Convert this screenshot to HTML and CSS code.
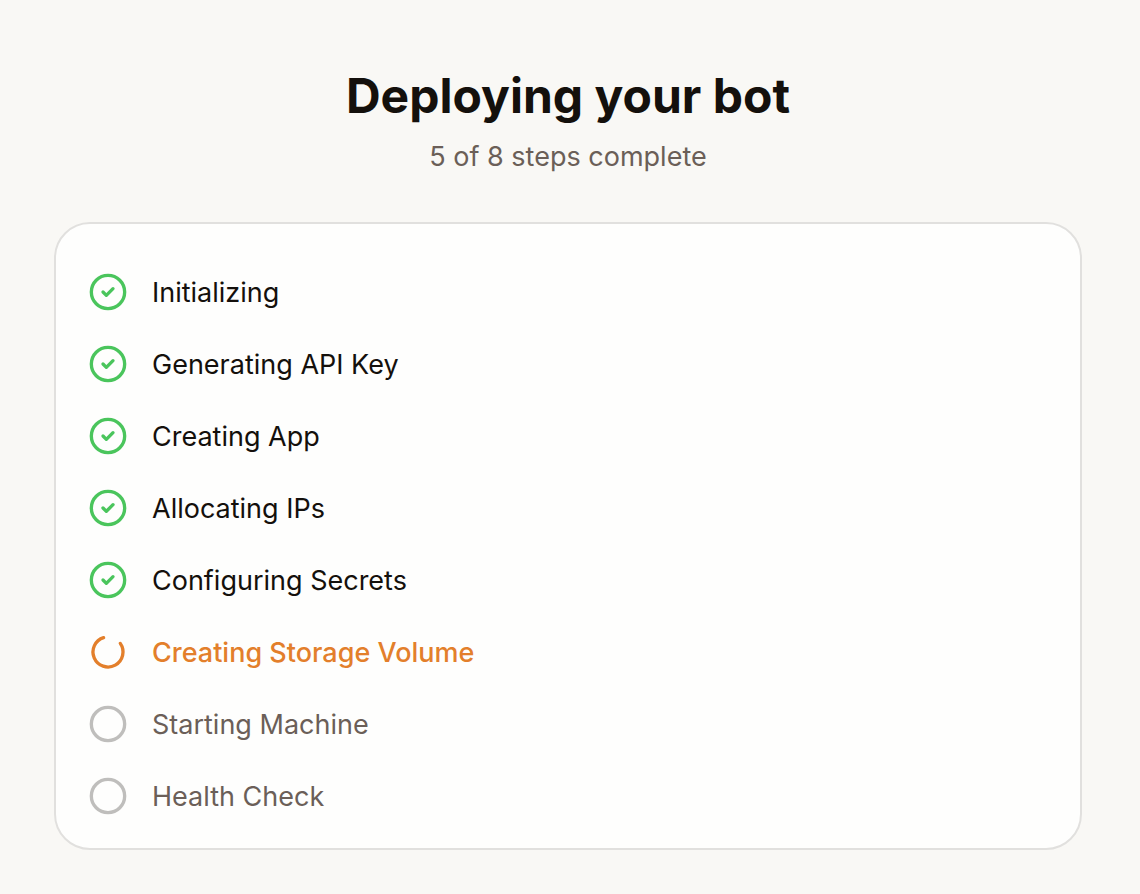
FILE: index.html
```
<!DOCTYPE html>
<html lang="en">
<head>
<meta charset="utf-8">
<meta name="viewport" content="width=device-width, initial-scale=1">
<title>Deploying your bot</title>
<link rel="stylesheet" href="styles.css">
</head>
<body>
<svg class="sprite" aria-hidden="true">
  <symbol id="done" viewBox="0 0 24 24"><circle cx="12" cy="12" r="10"/><path d="m9 12 2 2 4-4"/></symbol>
  <symbol id="active" viewBox="0 0 24 24"><path d="M21 12a9 9 0 1 1-6.219-8.56" transform="rotate(-35 12 12)"/></symbol>
  <symbol id="pending" viewBox="0 0 24 24"><circle cx="12" cy="12" r="10"/></symbol>
</svg>
<main class="page">
  <header class="header">
    <h1 class="title">Deploying your bot</h1>
    <p class="subtitle">5 of 8 steps complete</p>
  </header>
  <ol class="steps">
    <li class="step done"><svg class="icon" aria-hidden="true"><use href="#done"/></svg><span class="label">Initializing</span></li>
    <li class="step done"><svg class="icon" aria-hidden="true"><use href="#done"/></svg><span class="label">Generating API Key</span></li>
    <li class="step done"><svg class="icon" aria-hidden="true"><use href="#done"/></svg><span class="label">Creating App</span></li>
    <li class="step done"><svg class="icon" aria-hidden="true"><use href="#done"/></svg><span class="label">Allocating IPs</span></li>
    <li class="step done"><svg class="icon" aria-hidden="true"><use href="#done"/></svg><span class="label">Configuring Secrets</span></li>
    <li class="step active" aria-current="step"><svg class="icon" aria-hidden="true"><use href="#active"/></svg><span class="label">Creating Storage Volume</span></li>
    <li class="step pending"><svg class="icon" aria-hidden="true"><use href="#pending"/></svg><span class="label">Starting Machine</span></li>
    <li class="step pending"><svg class="icon" aria-hidden="true"><use href="#pending"/></svg><span class="label">Health Check</span></li>
  </ol>
</main>
</body>
</html>
```
FILE: styles.css
```
* { box-sizing: border-box; }
body { margin: 0; background: #f9f8f5; color: #14100c; font-family: Inter, "Liberation Sans", sans-serif; }
.sprite { display: none; }
.page { padding: 68px 58px 44px 54px; }
.header { text-align: center; margin-bottom: 44px; }
.title { margin: 0 0 12px; font-size: 48px; line-height: 56px; font-weight: 700; }
.subtitle { margin: 0; font-size: 27px; line-height: 42px; color: #6b5f58; }
.steps { margin: 0; padding: 32px 32px 16px; list-style: none; display: flex; flex-direction: column; background: #fefefd; border: 2px solid #e1e0de; border-radius: 36px; }
.step { display: flex; align-items: center; gap: 24px; min-height: 72px; font-size: 27px; line-height: 40px; }
.label { padding-top: 2px; }
.icon { flex: none; width: 40px; height: 40px; fill: none; stroke: currentColor; stroke-width: 2; stroke-linecap: round; stroke-linejoin: round; }
.done .icon { color: #4ac55c; }
.active { color: #e37f2b; font-weight: 500; }
.pending { color: #6b5f58; }
.pending .icon { color: #bfbebc; }
```
